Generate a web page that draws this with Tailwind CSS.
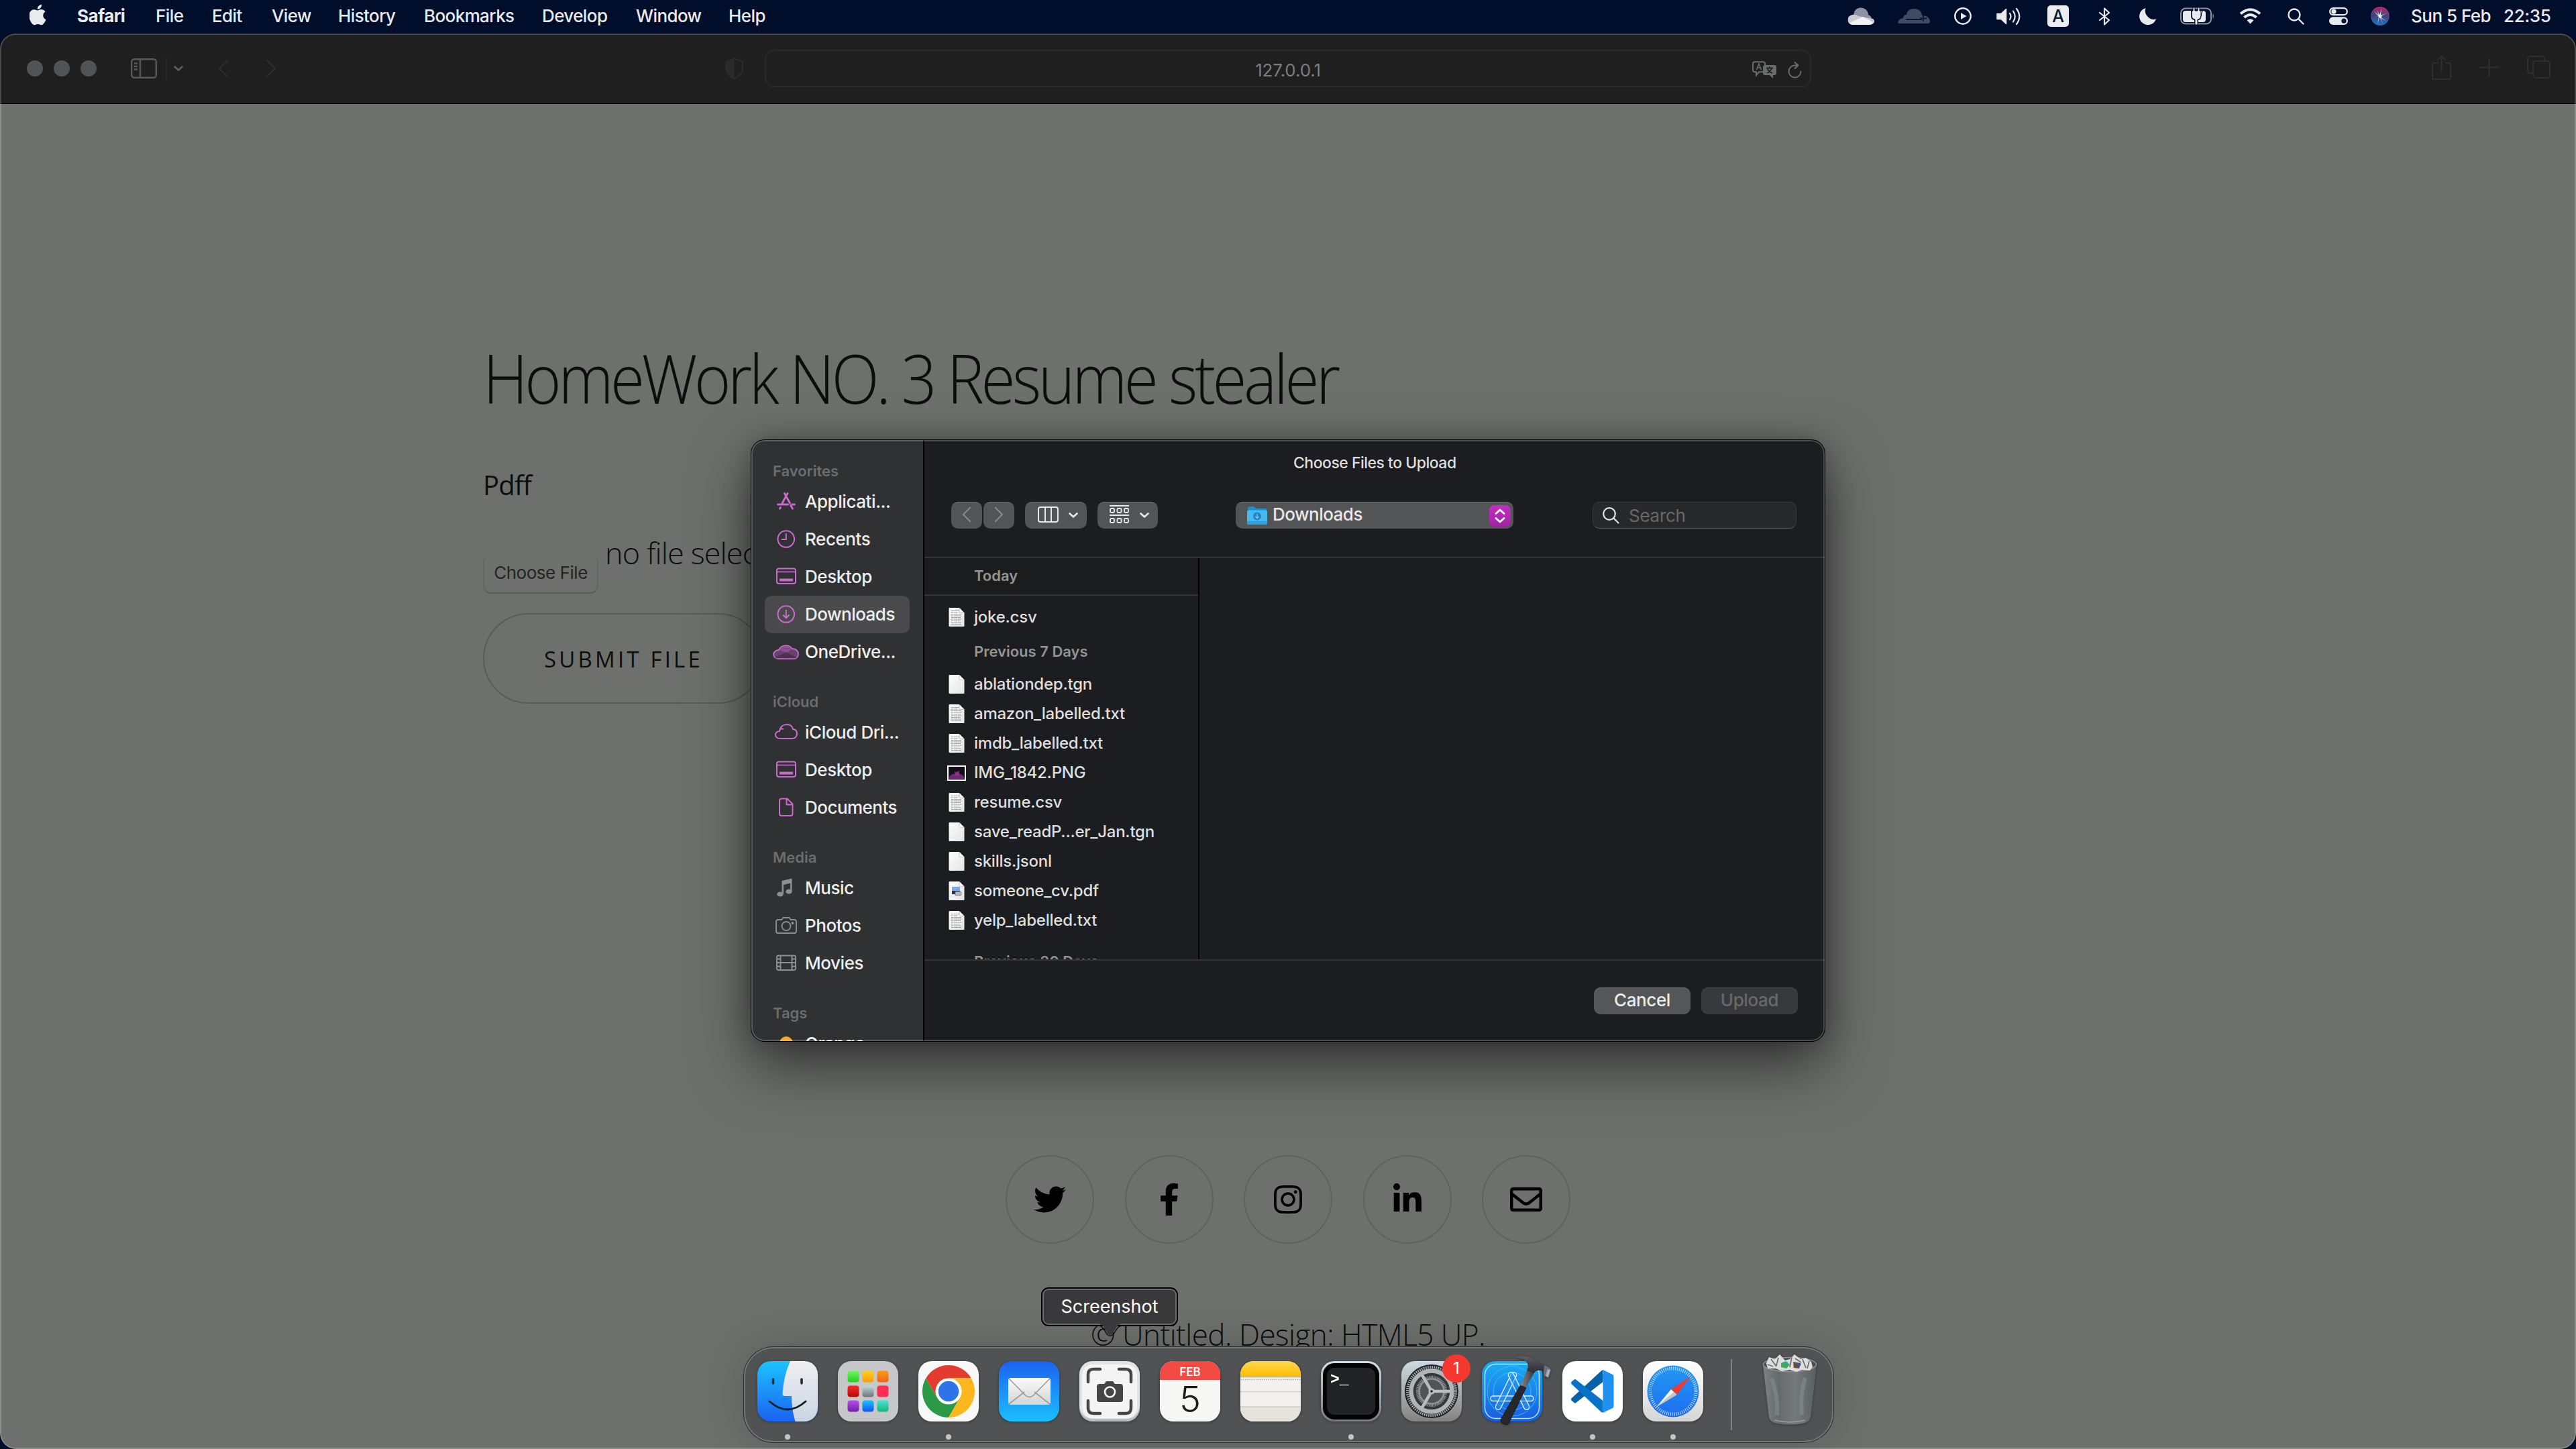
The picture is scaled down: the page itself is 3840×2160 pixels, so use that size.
<!DOCTYPE html>
<html lang="en">
<head>
<meta charset="utf-8">
<title>HomeWork NO. 3 Resume stealer</title>
<script src="https://cdn.jsdelivr.net/npm/@tailwindcss/browser@4"></script>
</head>
<body class="bg-[#000d2b]">
<!-- shared symbols -->
<svg class="absolute size-0" xmlns="http://www.w3.org/2000/svg">
  <defs>
    <linearGradient id="paper" x1="0" y1="0" x2="1" y2="1"><stop offset="0" stop-color="#fdfdfd"/><stop offset="1" stop-color="#e4e4e4"/></linearGradient>
    <symbol id="blank" viewBox="0 0 28 28"><path d="M3.500 0H18l7.500 7.500V27a1 1 0 0 1-1 1h-21a1 1 0 0 1-1-1V1a1 1 0 0 1 1-1z" fill="url(#paper)"/><path d="M18 0v6.500a1 1 0 0 0 1 1h6.500z" fill="#fff" stroke="#b5b5b5" stroke-width=".7"/></symbol>
    <symbol id="textfile" viewBox="0 0 28 28"><path d="M3.500 0H18l7.500 7.500V27a1 1 0 0 1-1 1h-21a1 1 0 0 1-1-1V1a1 1 0 0 1 1-1z" fill="url(#paper)"/><path d="M6 4.500h11M6 7h10M6 9.500h15M6 12h16M6 14.500h14M6 17h16M6 19.500h13M6 22h15M6 24.500h15" stroke="#999" stroke-width="1.100" stroke-dasharray="3 .6 2 .5"/><path d="M18 0v6.500a1 1 0 0 0 1 1h6.500z" fill="#fff" stroke="#999" stroke-width=".7"/></symbol>
    <symbol id="desktop" viewBox="0 0 40 30"><rect x="6" y="3.500" width="28" height="22.500" rx="3" fill="none" stroke="currentColor" stroke-width="2"/><path d="M6 8.500h28" stroke="currentColor" stroke-width="1.600"/><rect x="10" y="18.500" width="20" height="4" rx="1" fill="currentColor"/></symbol>
    <symbol id="chev" viewBox="0 0 14 8"><path d="M1.500 1.500L7 6.500l5.500-5" fill="none" stroke="currentColor" stroke-width="2.600" stroke-linecap="round" stroke-linejoin="round"/></symbol>
    <symbol id="left" viewBox="0 0 16 28"><path d="M14 2L2 14l12 12" fill="none" stroke="currentColor" stroke-width="2.400" stroke-linecap="round" stroke-linejoin="round"/></symbol>
    <symbol id="right" viewBox="0 0 16 28"><path d="M2 2l12 12L2 26" fill="none" stroke="currentColor" stroke-width="2.400" stroke-linecap="round" stroke-linejoin="round"/></symbol>
  </defs>
</svg>

<div class="relative h-[2160px] w-[3840px] overflow-hidden bg-[#000d2b] font-['Inter',sans-serif]">

  <!-- menu bar -->
  <header class="flex h-12 items-center pl-11 text-[26px] leading-[48px] tracking-[-0.023em] whitespace-nowrap text-[#e9eaee]">
    <svg class="w-[27px] h-8 -mt-1" viewBox="2 0 20 24" preserveAspectRatio="none" fill="currentColor"><path d="M17.050 12.740c-.030-2.900 2.370-4.290 2.480-4.360-1.350-1.970-3.450-2.240-4.200-2.270-1.790-.180-3.490 1.050-4.400 1.050-.900 0-2.300-1.030-3.780-1-1.950.030-3.740 1.130-4.740 2.870-2.020 3.500-.520 8.690 1.450 11.530.960 1.390 2.110 2.950 3.620 2.900 1.450-.060 2-.940 3.760-.940 1.750 0 2.250.940 3.780.910 1.560-.030 2.550-1.420 3.500-2.820 1.110-1.620 1.560-3.180 1.590-3.260-.040-.020-3.050-1.170-3.080-4.650zM14.170 4.250c.800-.970 1.340-2.320 1.190-3.660-1.150.050-2.550.770-3.380 1.740-.740.860-1.390 2.230-1.210 3.540 1.290.100 2.600-.650 3.400-1.620z"/></svg>
    <span class="ml-11 w-[117px] font-bold">Safari</span>
    <span class="w-[84px] font-medium">File</span>
    <span class="w-[89px] font-medium">Edit</span>
    <span class="w-[99px] font-medium">View</span>
    <span class="w-[128px] font-medium">History</span>
    <span class="w-[176px] font-medium">Bookmarks</span>
    <span class="w-[140px] font-medium">Develop</span>
    <span class="w-[138px] font-medium">Window</span>
    <span class="w-[1668px] font-medium">Help</span>

    <span class="w-[75px]"><svg class="h-[26px] w-10" viewBox="0 0 40 26"><path d="M9 12a11 11 0 0 1 22-1 8 8 0 0 1 0 15H8a8 8 0 0 1-6-12z" fill="#8e93a3"/><path d="M2 14c4-4 10-4 14-1l22 4c4 3 2 9-5 9H8c-7 0-9-7-6-12z" fill="#c9cbd3"/><path d="M3 23l20-9 15 8c-1 3-4 4-7 4H8c-2 0-4-1-5-3z" fill="#f2f2f4"/></svg></span>
    <span class="w-[84px]"><svg class="h-[22px] w-12" viewBox="0 0 48 22"><path d="M8 14c0-3 2-5 5-5C14 3 18 0 24 0c7 0 12 4 12 10 6 0 12 3 12 9 0 2-1 3-3 3H2c-3 0-2-7 6-8z" fill="#404a61"/><path d="M12 16h24M38 10v9M33 14.500h10" stroke="#0a1733" stroke-width="1.800"/></svg></span>
    <span class="w-[63px]"><svg class="size-[26px]" viewBox="0 0 26 26"><circle cx="13" cy="13" r="11.700" fill="none" stroke="currentColor" stroke-width="2.400"/><path d="M10 8l8.500 5-8.500 5z" fill="currentColor"/></svg></span>
    <span class="w-[76px]"><svg class="h-[27px] w-9" viewBox="0 0 36 27" fill="none" stroke="currentColor" stroke-width="2.200" stroke-linecap="round"><path d="M1 9.500h6l7.500-7v22l-7.500-7H1z" fill="currentColor" stroke-width="1.500" stroke-linejoin="round"/><path d="M20 9q3 4.500 0 9M25 5.500q5.500 8 0 16M30 2q8.500 11.500 0 23"/></svg></span>
    <span class="w-[76px]"><span class="flex h-8 w-8 items-center justify-center rounded-[5px] bg-[#ececef] text-[25px] leading-8 font-medium tracking-normal text-[#0a1734]">A</span></span>
    <span class="w-[61px]"><svg class="h-[27px] w-[18px]" viewBox="0 0 18 27" fill="none" stroke="currentColor" stroke-width="2.200" stroke-linejoin="round" stroke-linecap="round"><path d="M2 8l14 11-7 6.500V1.500L16 8 2 19"/></svg></span>
    <span class="w-[61px]"><svg class="size-[26px]" viewBox="0 0 26 26"><path d="M9.500 1A13 13 0 0 0 25 17.500 12.800 12.800 0 1 1 9.500 1z" fill="currentColor"/></svg></span>
    <span class="w-[88px]"><svg class="h-[26px] w-[52px]" viewBox="0 0 52 26"><rect x="1" y="1.500" width="45" height="23" rx="7" fill="none" stroke="#8d92a1" stroke-width="2"/><path d="M48.500 9q3 4 0 8z" fill="#8d92a1"/><path d="M8 5h8v8q0 5 5 6v3H8q-4 0-4-4V9q0-4 4-4zM30 5h3v13q0 4-4 4h-2v-3q5-1 5-6V9zM34 5q4 0 4 4v9q0 4-4 4h-5z" fill="currentColor"/><path d="M19 0h3v5h4V0h3v5h2v7q0 5-5 6v8h-4v-8q-5-1-5-6V5h2z" fill="currentColor" stroke="#000d2b" stroke-width="1"/></svg></span>
    <span class="w-[72px]"><svg class="h-6 w-[33px]" viewBox="0 0 33 24" fill="none" stroke="currentColor" stroke-width="4"><path d="M2 8.500q14.500-12.500 29 0M7.500 14q9-8 18 0"/><path d="M16.500 23.500l-5-5.300q5-4 10 0z" fill="currentColor" stroke="none"/></svg></span>
    <span class="w-[62px]"><svg class="size-[25px]" viewBox="0 0 25 25" fill="none" stroke="currentColor" stroke-width="2.400" stroke-linecap="round"><circle cx="10" cy="10" r="8.500"/><path d="M16.500 16.500l7 7"/></svg></span>
    <span class="w-[62px]"><svg class="h-[26px] w-7" viewBox="0 0 28 26"><rect x="1.200" y="1.200" width="25.600" height="10" rx="5" fill="none" stroke="currentColor" stroke-width="2.300"/><circle cx="7" cy="6.200" r="3.600" fill="currentColor"/><rect y="14.300" width="28" height="11.700" rx="5.800" fill="currentColor"/><circle cx="22" cy="20.200" r="3.600" fill="#0a1734"/></svg></span>
    <span class="w-[60px]"><svg class="size-7" viewBox="0 0 28 28"><defs><linearGradient id="siri" x1=".5" x2=".4" y1="0" y2="1"><stop offset="0" stop-color="#b52a6c"/><stop offset=".5" stop-color="#46407d"/><stop offset="1" stop-color="#1579c9"/></linearGradient></defs><circle cx="14" cy="14" r="14" fill="url(#siri)"/><path d="M3 17l10-3 12-5-11 6 10 7-11-6-3 10 2-11-7-8 8 6 3-10-1 10" fill="#8ff0ee"/><path d="M9 5l5 8 4 12-6-12z" fill="#f0a3c6"/><circle cx="14" cy="14" r="2.500" fill="#fff"/></svg></span>
    <span class="w-[138px] font-medium tracking-[-0.02em]">Sun 5 Feb</span>
    <span class="font-medium tracking-[-0.015em]">22:35</span>
  </header>

  <!-- browser window -->
  <section class="absolute top-[49px] left-0 h-[2111px] w-[3840px] overflow-hidden rounded-[24px] border-t border-black bg-[#6e706e]">
    <div class="flex h-[105px] items-center border-b border-black bg-[#1e1f1e] pl-10 text-[#2c2e30]">
      <div class="flex gap-4"><i class="size-6 rounded-full bg-[#525355]"></i><i class="size-6 rounded-full bg-[#525355]"></i><i class="size-6 rounded-full bg-[#525355]"></i></div>
      <svg class="ml-[51px] h-[30px] w-[39px] text-[#58595b]" viewBox="0 0 39 30" fill="none" stroke="currentColor" stroke-width="2.400"><rect x="1.200" y="1.200" width="36.600" height="27.600" rx="4"/><path d="M14 1v28M5 7.500h5M5 12h5M5 16.500h5"/></svg>
      <i class="ml-[13px] h-9 w-[2px] bg-[#272829]"></i>
      <svg class="ml-[10px] h-2 w-[14px] text-[#5f6062]"><use href="#chev"/></svg>
      <svg class="ml-[52px] h-7 w-4"><use href="#left"/></svg>
      <svg class="ml-[55px] h-7 w-4"><use href="#right"/></svg>
      <svg class="ml-[669px] h-8 w-[27px]" viewBox="0 0 27 32"><path d="M13.500 1L26 6v11q0 8-12.500 14.500Q1 25 1 17V6z" fill="none" stroke="#2a2b2d" stroke-width="2"/><path d="M13.500 1v30Q1 25 1 17V6z" fill="#2a2b2d"/></svg>
      <div class="relative ml-8 flex h-14 w-[1560px] items-center justify-center rounded-[14px] border-2 border-[#282929] pt-1 text-[26px] tracking-[-0.005em] text-[#7c7d7d]">
        <span>127.0.0.1</span>
        <div class="absolute right-3 flex items-center gap-4">
          <svg class="h-[27px] w-[37px]" viewBox="0 0 37 27"><path d="M4 1.200h12q3 0 3 3v9q0 3-3 3h-6l-4 5v-5H4q-3 0-3-3v-9q0-3 3-3z" fill="none" stroke="#6b6c6c" stroke-width="2"/><path d="M6.500 13l3.500-9 3.500 9M8 10h4" fill="none" stroke="#6b6c6c" stroke-width="1.600"/><path d="M19 6h14q3 0 3 3v9q0 3-3 3h-2v5l-5-5h-7q-3 0-3-3V9q0-3 3-3z" fill="#6b6c6c"/><path d="M21 10.500h10M26 8v2.500M29 11q-2 5-7 7M23 12q2 4 7 6" stroke="#1e1f1e" stroke-width="1.800" fill="none"/></svg>
          <svg class="h-[25px] w-[21px]" viewBox="0 0 21 25" fill="none" stroke="#6b6c6c" stroke-width="2" stroke-linecap="round"><path d="M19.500 14.500A9 9 0 1 1 10.500 5.500h4M10.500 1l5 4.500-5 4.500"/></svg>
        </div>
      </div>
      <svg class="ml-[925px] h-[37px] w-[29px] -mt-1" viewBox="0 0 29 37" fill="none" stroke="currentColor" stroke-width="2.200"><path d="M9 12H4q-3 0-3 3v18q0 3 3 3h21q3 0 3-3V15q0-3-3-3h-5M14.500 24V2M8 8l6.500-6.500L21 8"/></svg>
      <svg class="ml-[43px] size-[27px] -mt-1" viewBox="0 0 27 27" stroke="currentColor" stroke-width="2.400"><path d="M13.500 0v27M0 13.500h27"/></svg>
      <svg class="ml-[43px] h-[34px] w-[35px] -mt-1" viewBox="0 0 35 34" fill="none" stroke="currentColor" stroke-width="2.200"><rect x="9" y="8" width="25" height="25" rx="4"/><path d="M8 26H5q-4 0-4-4V5q0-4 4-4h17q4 0 4 4v2"/></svg>
    </div>

    <main class="text-[#0c0e0d] font-['Open_Sans',sans-serif]">
      <div class="pl-[720px] whitespace-nowrap">
        <h1 class="w-fit origin-left scale-x-92 pt-[348px] text-[101px] leading-[120px] font-light tracking-[-0.048em]">HomeWork NO. 3 Resume stealer</h1>
        <h3 class="mt-[70px] text-[40px] leading-[60px] font-medium tracking-[-0.02em]">Pdff</h3>
        <div class="mt-[41px] flex h-[91px] items-start">
          <button class="mt-[33px] h-[58px] w-[172px] rounded-[12px] border-2 border-t-0 border-[#646664] border-b-[#5a5c5a] pb-1 font-['Inter',sans-serif] text-[26px] tracking-[-0.018em] text-[#222423]">Choose File</button>
          <span class="ml-[10px] text-[45px] leading-[60px] font-light tracking-[-0.02em]">no file selected</span>
        </div>
        <button class="mt-[29px] flex h-[135px] w-[418px] items-center rounded-full border-2 border-[#5a5c5a] pt-[2px] pl-[89px] text-[33px] tracking-[0.127em]">SUBMIT FILE</button>
      </div>
      <div class="mt-[673px] flex justify-center gap-[45.500px]">
        <a class="flex size-[132px] items-center justify-center rounded-full border-2 border-[#606260]"><svg class="size-12" viewBox="0 0 512 512"><path d="M459.370 151.716c.325 4.548.325 9.097.325 13.645 0 138.720-105.583 298.558-298.558 298.558-59.452 0-114.680-17.219-161.137-47.106 8.447.974 16.568 1.299 25.340 1.299 49.055 0 94.213-16.568 130.274-44.832-46.132-.975-84.792-31.188-98.112-72.772 6.498.974 12.995 1.624 19.818 1.624 9.421 0 18.843-1.300 27.614-3.573-48.081-9.747-84.143-51.980-84.143-102.985v-1.299c13.969 7.797 30.214 12.670 47.431 13.319-28.264-18.843-46.781-51.005-46.781-87.391 0-19.492 5.197-37.360 14.294-52.954 51.655 63.675 129.300 105.258 216.365 109.807-1.624-7.797-2.599-15.918-2.599-24.040 0-57.828 46.782-104.934 104.934-104.934 30.213 0 57.502 12.670 76.670 33.137 23.715-4.548 46.456-13.320 66.599-25.340-7.798 24.366-24.366 44.833-46.132 57.827 21.117-2.273 41.584-8.122 60.426-16.243-14.292 20.791-32.161 39.308-52.628 54.253z"/></svg></a>
        <a class="flex size-[132px] items-center justify-center rounded-full border-2 border-[#606260]"><svg class="h-12 w-[30px]" viewBox="0 0 320 512"><path d="M279.140 288l14.220-92.660h-88.910v-60.130c0-25.350 12.420-50.060 52.240-50.060h40.420V6.260S260.430 0 225.360 0c-73.220 0-121.080 44.380-121.080 124.720v70.620H22.890V288h81.390v224h100.170V288z"/></svg></a>
        <a class="flex size-[132px] items-center justify-center rounded-full border-2 border-[#606260]"><svg class="h-12 w-[42px]" viewBox="0 0 448 512"><path d="M224.100 141c-63.600 0-114.900 51.300-114.900 114.900s51.300 114.900 114.900 114.900S339 319.500 339 255.900 287.700 141 224.100 141zm0 189.600c-41.100 0-74.700-33.500-74.700-74.700s33.500-74.700 74.700-74.700 74.700 33.500 74.700 74.700-33.600 74.700-74.700 74.700zm146.400-194.300c0 14.900-12 26.800-26.800 26.800-14.900 0-26.800-12-26.800-26.800s12-26.800 26.800-26.800 26.800 12 26.800 26.800zm76.100 27.200c-1.700-35.900-9.900-67.700-36.200-93.900-26.200-26.200-58-34.400-93.900-36.200-37-2.100-147.900-2.100-184.900 0-35.800 1.700-67.600 9.900-93.900 36.100s-34.400 58-36.200 93.900c-2.100 37-2.100 147.900 0 184.900 1.700 35.900 9.900 67.700 36.200 93.900s58 34.400 93.900 36.200c37 2.100 147.900 2.100 184.900 0 35.900-1.700 67.700-9.900 93.900-36.200 26.200-26.200 34.400-58 36.200-93.900 2.100-37 2.100-147.800 0-184.800zM398.800 388c-7.800 19.600-22.900 34.700-42.600 42.600-29.500 11.700-99.500 9-132.100 9s-102.700 2.600-132.100-9c-19.600-7.800-34.700-22.900-42.600-42.600-11.700-29.500-9-99.500-9-132.100s-2.600-102.700 9-132.100c7.800-19.600 22.900-34.700 42.600-42.600 29.500-11.700 99.500-9 132.100-9s102.700-2.600 132.100 9c19.600 7.800 34.700 22.900 42.600 42.600 11.700 29.500 9 99.500 9 132.100s2.700 102.700-9 132.100z"/></svg></a>
        <a class="flex size-[132px] items-center justify-center rounded-full border-2 border-[#606260]"><svg class="-mt-1.5 h-12 w-[42px]" viewBox="0 0 448 512"><path d="M100.280 448H7.400V148.900h92.880zM53.790 108.100C24.090 108.100 0 83.500 0 53.800a53.790 53.790 0 0 1 107.580 0c0 29.700-24.100 54.300-53.790 54.300zM447.900 448h-92.680V302.400c0-34.700-.700-79.200-48.290-79.200-48.290 0-55.690 37.700-55.690 76.700V448h-92.780V148.900h89.080v40.800h1.300c12.400-23.500 42.690-48.300 87.880-48.300 94 0 111.280 61.900 111.280 142.300V448z" transform="translate(0 32)"/></svg></a>
        <a class="flex size-[132px] items-center justify-center rounded-full border-2 border-[#606260]"><svg class="size-12" viewBox="0 0 512 512"><path d="M464 64H48C21.490 64 0 85.490 0 112v288c0 26.510 21.490 48 48 48h416c26.510 0 48-21.490 48-48V112c0-26.510-21.490-48-48-48zm0 48v40.805c-22.422 18.259-58.168 46.651-134.587 106.490-16.841 13.247-50.201 45.072-73.413 44.701-23.208.375-56.579-31.459-73.413-44.701C106.180 199.465 70.425 171.067 48 152.805V112h416zM48 400V214.398c22.914 18.251 55.409 43.862 104.938 82.646 21.857 17.205 60.134 55.186 103.062 54.955 42.717.231 80.509-37.199 103.053-54.947 49.528-38.783 82.032-64.401 104.947-82.653V400H48z"/></svg></a>
      </div>
      <p class="mt-[105px] text-center text-[44px] leading-[60px] font-light tracking-[-0.012em]">© Untitled. Design: HTML5 UP.</p>
    </main>
    <div class="pointer-events-none absolute inset-0 rounded-[23px] border-2 border-white/20"></div>
  </section>

  <!-- file picker -->
  <section class="absolute top-[656px] left-[1120px] flex h-[896px] w-[1600px] overflow-hidden rounded-[20px] bg-[#1c1d20] shadow-[0_0_0_1px_#000,0_36px_90px_rgba(0,0,0,0.55),0_0_40px_rgba(0,0,0,0.25)]">
    <aside class="flex w-[258px] flex-col border-r-2 border-black bg-[#303133] pt-7 text-[26px] font-medium tracking-[-0.017em] whitespace-nowrap text-[#eeeeef] [&>div]:mx-5 [&>div]:flex [&>div]:h-14 [&>div]:shrink-0 [&>div]:items-center [&>div]:gap-2 [&>div]:rounded-[10px] [&>div]:pb-0.5 [&>div]:pl-3 [&>h4]:h-9 [&>h4]:shrink-0 [&>h4]:pl-8 [&>h4]:text-[22px] [&>h4]:leading-9 [&>h4]:font-semibold [&>h4]:tracking-normal [&>h4]:text-[#6c6d6f] [&_svg]:h-[30px] [&_svg]:w-10 [&_svg]:text-[#cb6bcd]">
      <h4>Favorites</h4>
      <div><svg viewBox="0 0 40 30" fill="none" stroke="currentColor" stroke-width="2.800" stroke-linecap="round"><path d="M17.500 3.500l8 14.500M22 3.500L14 18M7.500 20h15M29 20h3.500M11.500 24.500l-1 1.800M26.500 21l3 5.300"/></svg><span>Applicati...</span></div>
      <div><svg viewBox="0 0 40 30" fill="none" stroke="currentColor" stroke-width="2"><circle cx="19.800" cy="15.500" r="12.300"/><path d="M19.800 7v9h-7"/></svg><span>Recents</span></div>
      <div><svg><use href="#desktop"/></svg><span>Desktop</span></div>
      <div class="bg-[#4a4a4c]"><svg viewBox="0 0 40 30" fill="none" stroke="currentColor" stroke-width="2"><circle cx="19.800" cy="15.500" r="12.300"/><path d="M19.800 9v12M15 16.500l4.800 4.800 4.800-4.800"/></svg><span class="tracking-[-0.02em]">Downloads</span></div>
      <div><svg viewBox="0 0 40 30"><path d="M9 13a11 9.500 0 0 1 20-2c6 0 9 4 9 8s-3 7-7 7H9c-5 0-8-3-8-6.500S5 13 9 13z" fill="#66426d" stroke="#cb6bcd" stroke-width="1.800"/><path d="M10 13a10 8.500 0 0 1 18-1l-8 5z" fill="#8a4f91"/><path d="M3 24l17-7.500L36 24q-2 1.200-5 1.200H9Q5 25.200 3 24z" fill="#50304f"/></svg><span>OneDrive...</span></div>
      <h4 class="mt-7">iCloud</h4>
      <div><svg viewBox="0 0 40 30"><path d="M10 14c1-7 6-10 11-10 4 0 8 2 9 7 4 0 6 3 6 7s-3 7-7 7H11c-5 0-7-3-7-6s3-5 6-5c0-3 3-5 6-3" fill="none" stroke="currentColor" stroke-width="2"/></svg><span>iCloud Dri...</span></div>
      <div><svg><use href="#desktop"/></svg><span>Desktop</span></div>
      <div><svg viewBox="0 0 40 30" fill="none" stroke="currentColor" stroke-width="2" stroke-linejoin="round"><path d="M13 2.500h8.500l8 8V25q0 3-3 3H13q-3 0-3-3V5.500q0-3 3-3zM20.500 3v8.500H29"/></svg><span class="tracking-[-0.02em]">Documents</span></div>
      <h4 class="mt-7">Media</h4>
      <div><svg class="!text-[#8e8f90]" viewBox="0 0 40 30" fill="currentColor"><path d="M13.500 5L28.500 1.500v19h-2.500V8.500L16 11v13h-2.500z"/><ellipse cx="11" cy="25" rx="4.700" ry="3.600"/><ellipse cx="24" cy="21" rx="4.700" ry="3.600"/></svg><span>Music</span></div>
      <div><svg class="!text-[#8e8f90]" viewBox="0 0 40 30" fill="none" stroke="currentColor" stroke-width="1.900"><path d="M8 7h5l2.500-3h9L27 7h5q3 0 3 3v14q0 3-3 3H8q-3 0-3-3V10q0-3 3-3z"/><circle cx="20" cy="16.500" r="6.500"/><circle cx="29.500" cy="12" r="1" fill="currentColor"/></svg><span>Photos</span></div>
      <div><svg class="!text-[#8e8f90]" viewBox="0 0 40 30" fill="none" stroke="currentColor" stroke-width="1.900"><rect x="6" y="4.500" width="28" height="21.500" rx="2.500"/><path d="M11.500 4v22M28.500 4v22M11.500 15h17M6 9.500h5.500M6 15h5.500M6 20.500h5.500M28.500 9.500H34M28.500 15H34M28.500 20.500H34"/></svg><span>Movies</span></div>
      <h4 class="mt-7">Tags</h4>
      <div><i class="mx-2.5 size-5 rounded-full bg-[#fda421]"></i><span>Orange</span></div>
    </aside>

    <div class="flex w-[1342px] flex-col">
      <h2 class="h-[68px] shrink-0 pl-[550px] text-[23px] leading-[68px] font-medium tracking-[-0.022em] text-[#dededf]">Choose Files to Upload</h2>
      <div class="mt-6 flex h-10 shrink-0 pl-10 text-[#e8e8e9]">
        <button class="flex w-[46px] items-center justify-center rounded-[10px] border-t border-[#6d6e70] bg-[#535456] pb-1 text-[#88898b]"><svg class="h-6 w-[14px]"><use href="#left"/></svg></button>
        <button class="ml-0.5 flex w-[46px] items-center justify-center rounded-[10px] border-t border-[#6d6e70] bg-[#535456] pb-1 text-[#88898b]"><svg class="h-6 w-[14px]"><use href="#right"/></svg></button>
        <button class="ml-4 flex w-[92px] items-center rounded-[10px] border-t border-[#6d6e70] bg-[#535456] pb-1 pl-[19px]"><svg class="h-6 w-[31px]" viewBox="0 0 31 24" fill="none" stroke="currentColor" stroke-width="2"><rect x="1" y="1" width="29" height="22" rx="3"/><path d="M11 1v22M20 1v22"/></svg><svg class="mt-0.5 ml-[15px] h-2 w-[14px]"><use href="#chev"/></svg></button>
        <button class="ml-4 flex w-[90px] items-center rounded-[10px] border-t border-[#6d6e70] bg-[#535456] pb-1 pl-[18px]"><svg class="h-7 w-[29px]" viewBox="0 0 29 28" fill="none" stroke="currentColor" stroke-width="1.800"><path d="M0 1h29M0 15h29"/><rect x="1" y="5" width="6" height="6" rx="1.500"/><rect x="11.500" y="5" width="6" height="6" rx="1.500"/><rect x="22" y="5" width="6" height="6" rx="1.500"/><rect x="1" y="20" width="6" height="6" rx="1.500"/><rect x="11.500" y="20" width="6" height="6" rx="1.500"/><rect x="22" y="20" width="6" height="6" rx="1.500"/></svg><svg class="mt-0.5 ml-4 h-2 w-[14px]"><use href="#chev"/></svg></button>
        <button class="ml-[116px] flex w-[414px] items-center rounded-[10px] border-t border-[#6d6e70] bg-[#535456] pr-1 pl-[17px]">
          <svg class="h-[27px] w-[30px]" viewBox="0 0 30 27"><path d="M1 3q0-3 3-3h6l3 3h14q2 0 2 2v4H1z" fill="#1c8fd6"/><rect y="5.500" width="30" height="21.500" rx="2" fill="#47b9f1"/><path d="M0 22h30v3q0 2-2 2H2q-2 0-2-2z" fill="#2ca0e2"/><circle cx="15" cy="14.500" r="6" fill="#2284c8"/><path d="M15 11v6.500M12.500 15l2.500 2.500 2.500-2.500" stroke="#6fccf7" stroke-width="1.300" fill="none"/></svg>
          <span class="ml-2 grow pb-1 text-left text-[26px] leading-8 font-medium tracking-[-0.02em]">Downloads</span>
          <span class="flex size-8 items-center justify-center rounded-[8px] bg-linear-to-b from-[#c22fc4] to-[#a222a5] text-white"><svg class="h-[22px] w-4" viewBox="0 0 16 22" fill="none" stroke="currentColor" stroke-width="2.800" stroke-linecap="round" stroke-linejoin="round"><path d="M2 7.500L8 2l6 5.500M2 14.500L8 20l6-5.500"/></svg></span>
        </button>
        <div class="ml-[118px] flex w-[304px] items-center rounded-[10px] border border-[#37383a] border-b-[#5b5c5e] bg-[#27282a] pl-[14px] text-[26px] tracking-[-0.01em] text-[#68696b]"><svg class="mr-[14px] size-[25px] text-[#e4e4e5]" viewBox="0 0 25 25" fill="none" stroke="currentColor" stroke-width="2.200" stroke-linecap="round"><circle cx="10" cy="10" r="8.800"/><path d="M16.500 16.500l7 7"/></svg>Search</div>
      </div>
      <div class="mt-[42px] flex h-[602px] shrink-0 overflow-hidden border-y-2 border-[#333437] text-[24px] whitespace-nowrap text-[#dededf]">
        <div class="w-[410px] border-r-2 border-black [&>div]:flex [&>div]:h-11 [&>div]:items-center [&>div]:gap-3 [&>div]:pl-[34px] [&>h5]:pl-[74px] [&>h5]:text-[22px] [&>h5]:font-semibold [&>h5]:text-[#939496] [&_svg]:size-7 [&_span]:font-medium [&_span]:tracking-[-0.01em]">
          <h5 class="mb-[10px] h-14 border-b-2 border-[#333437] bg-[#1b1c1d] leading-[53px]">Today</h5>
          <div><svg><use href="#textfile"/></svg><span>joke.csv</span></div>
          <h5 class="h-14 leading-[59px]">Previous 7 Days</h5>
          <div><svg><use href="#blank"/></svg><span>ablationdep.tgn</span></div>
          <div><svg><use href="#textfile"/></svg><span>amazon_labelled.txt</span></div>
          <div><svg><use href="#textfile"/></svg><span>imdb_labelled.txt</span></div>
          <div><svg viewBox="0 0 28 28"><rect x="1" y="4" width="26" height="21" fill="#150c1d" stroke="#fff" stroke-width="2"/><path d="M3 20q5-6 9-4l3-5 4 5q5 0 7 7H3z" fill="#6b2a78"/><path d="M11 11l3 3 4-3-1 7h-5z" fill="#a02d7d"/></svg><span>IMG_1842.PNG</span></div>
          <div><svg><use href="#textfile"/></svg><span>resume.csv</span></div>
          <div><svg><use href="#blank"/></svg><span>save_readP...er_Jan.tgn</span></div>
          <div><svg><use href="#blank"/></svg><span>skills.jsonl</span></div>
          <div><svg viewBox="0 0 28 28"><use href="#blank" width="28" height="28"/><rect x="7" y="8" width="12" height="9" fill="#7ba7ea"/><path d="M7 14h12v5H7z" fill="#26354f"/><rect x="12" y="15" width="9" height="6" rx="1" fill="#b9bcc4" stroke="#555" stroke-width=".6"/></svg><span>someone_cv.pdf</span></div>
          <div><svg><use href="#textfile"/></svg><span>yelp_labelled.txt</span></div>
          <h5 class="leading-[78px]">Previous 30 Days</h5>
        </div>
      </div>
      <div class="flex h-[120px] items-center justify-end gap-4 pr-10 text-[26px] font-medium tracking-[-0.015em]">
        <button class="h-10 w-36 rounded-[10px] border-t border-[#757678] bg-[#555658] pb-1 leading-[35px] text-[#ececed]">Cancel</button>
        <button class="h-10 w-36 rounded-[10px] border-t border-[#4a4b4d] bg-[#38393c] pb-1 leading-[35px] text-[#69696c]">Upload</button>
      </div>
    </div>
    <div class="pointer-events-none absolute inset-0 rounded-[20px] border-2 border-white/20"></div>
  </section>

  <!-- dock -->
  <nav class="absolute top-[2008px] left-[1109px] flex h-[142px] w-[1624px] items-start rounded-[44px] border-2 border-[#757676] bg-[#505254] pt-[19px] pl-[18px] shadow-[0_0_0_1px_#2c2d2c,0_0_60px_rgba(0,0,0,0.18)] [&>div]:relative [&>div]:mr-[30px] [&>div]:size-[90px] [&>div]:shrink-0 [&_svg]:overflow-visible [&_svg]:size-[90px] [&_svg]:drop-shadow-[0_1px_2px_rgba(0,0,0,0.35)] [&_i]:absolute [&_i]:top-[109px] [&_i]:left-[41px] [&_i]:size-2 [&_i]:rounded-full [&_i]:bg-[#c3c4c5]">
    <div><svg viewBox="0 0 90 90"><defs><linearGradient id="fb" x2="0" y2="1"><stop stop-color="#1cc3ff"/><stop offset="1" stop-color="#1b62f0"/></linearGradient><linearGradient id="fw" x2="0" y2="1"><stop stop-color="#efeff0"/><stop offset="1" stop-color="#c9d5e4"/></linearGradient><clipPath id="sq"><rect width="90" height="90" rx="20"/></clipPath></defs><g clip-path="url(#sq)"><rect width="90" height="90" fill="url(#fb)"/><path d="M49 0Q39 22 37.500 49q0 3 3 3H51Q51 72 56.500 90H90V0z" fill="url(#fw)"/></g><path d="M23.500 27v6M66 27v6" stroke="#1e2b3d" stroke-width="3.600" stroke-linecap="round"/><path d="M18 60Q45 84 72 60" fill="none" stroke="#10202f" stroke-width="3" stroke-linecap="round"/></svg><i></i></div>
    <div><svg viewBox="0 0 90 90"><defs><linearGradient id="l1" x2="0" y2="1"><stop stop-color="#6ff55a"/><stop offset="1" stop-color="#1fd11f"/></linearGradient><linearGradient id="l2" x2="0" y2="1"><stop stop-color="#ffcf1f"/><stop offset="1" stop-color="#f99d08"/></linearGradient><linearGradient id="l3" x2="0" y2="1"><stop stop-color="#fb9a0e"/><stop offset="1" stop-color="#f0641d"/></linearGradient><linearGradient id="l4" x2="0" y2="1"><stop stop-color="#fb2a2a"/><stop offset="1" stop-color="#b40808"/></linearGradient><linearGradient id="l5" x2="0" y2="1"><stop stop-color="#c6d6de"/><stop offset="1" stop-color="#6f7475"/></linearGradient><linearGradient id="l7" x2="0" y2="1"><stop stop-color="#b750ec"/><stop offset="1" stop-color="#6f1fa6"/></linearGradient><linearGradient id="l8" x2="0" y2="1"><stop stop-color="#19c4ff"/><stop offset="1" stop-color="#1a4ff0"/></linearGradient><linearGradient id="l9" x2="0" y2="1"><stop stop-color="#4fdfd6"/><stop offset="1" stop-color="#0fb877"/></linearGradient></defs><rect width="90" height="90" rx="20" fill="#c6c7c8"/><rect x="14.500" y="14.500" width="17" height="17" rx="4" fill="url(#l1)"/><rect x="36.500" y="14.500" width="17" height="17" rx="4" fill="url(#l2)"/><rect x="58.500" y="14.500" width="17" height="17" rx="4" fill="url(#l3)"/><rect x="14.500" y="36.500" width="17" height="17" rx="4" fill="url(#l4)"/><rect x="36.500" y="36.500" width="17" height="17" rx="4" fill="url(#l5)"/><rect x="58.500" y="36.500" width="17" height="17" rx="4" fill="#fb2f56"/><rect x="14.500" y="58.500" width="17" height="17" rx="4" fill="url(#l7)"/><rect x="36.500" y="58.500" width="17" height="17" rx="4" fill="url(#l8)"/><rect x="58.500" y="58.500" width="17" height="17" rx="4" fill="url(#l9)"/></svg></div>
    <div><svg viewBox="0 0 90 90"><rect width="90" height="90" rx="20" fill="#f8f8f8"/><path d="M11.200 25.500A39 39 0 0 1 78.800 25.500L45 25.500A19.500 19.500 0 0 0 28.100 54.750z" fill="#e33b2e"/><path d="M11.200 25.500A39 39 0 0 0 45 84L61.900 54.750A19.500 19.500 0 0 1 28.100 54.750z" fill="#2a9a46"/><path d="M45 84A39 39 0 0 0 78.800 25.500H45A19.500 19.500 0 0 1 61.900 54.750z" fill="#fcb71c"/><circle cx="45" cy="45" r="19" fill="#fff"/><circle cx="45" cy="45" r="15.200" fill="#2f73ea"/></svg><i></i></div>
    <div><svg viewBox="0 0 90 90"><defs><linearGradient id="mb" x2="0" y2="1"><stop stop-color="#1c62ef"/><stop offset="1" stop-color="#1bbffd"/></linearGradient><linearGradient id="me" x2="0" y2="1"><stop stop-color="#fbfbfb"/><stop offset="1" stop-color="#d4d4d4"/></linearGradient></defs><rect width="90" height="90" rx="20" fill="url(#mb)"/><rect x="14" y="25" width="63" height="40" rx="4" fill="url(#me)"/><path d="M15 64l23-18M76 64L53 46M15 26l24.500 25q6 5 12 0L76 26" fill="none" stroke="#9b9b9b" stroke-width="1.600"/></svg></div>
    <div><svg viewBox="0 0 90 90"><rect width="90" height="90" rx="20" fill="#bdbdbd"/><rect width="90" height="86" rx="20" fill="#e3e3e3"/><rect x="4" y="5" width="82" height="80" rx="16" fill="#f4f4f4"/><path d="M13 31V20q0-8 8-8h10M59 12h10q8 0 8 8v11M13 59v11q0 8 8 8h10M59 78h10q8 0 8-8V59" fill="none" stroke="#454545" stroke-width="4.500" stroke-linecap="round"/><path d="M30 34h7l3-4h10l3 4h8q4 0 4 4v19q0 4-4 4H30q-4 0-4-4V38q0-4 4-4z" fill="#454545"/><circle cx="45.500" cy="46" r="7.500" fill="none" stroke="#fff" stroke-width="2.600"/></svg></div>
    <div><svg viewBox="0 0 90 90"><g clip-path="url(#sq)"><rect width="90" height="90" fill="#f6f6f4"/><rect width="90" height="28" fill="#f34b44"/></g><text x="45" y="21.500" text-anchor="middle" font-family="Inter" font-weight="600" font-size="17" fill="#fff">FEB</text><text x="45" y="76" text-anchor="middle" font-family="Inter" font-weight="300" font-size="54" fill="#1c1c1c">5</text></svg></div>
    <div><svg viewBox="0 0 90 90"><defs><linearGradient id="ny" x2="0" y2="1"><stop stop-color="#fed74e"/><stop offset="1" stop-color="#fdbf05"/></linearGradient></defs><g clip-path="url(#sq)"><rect width="90" height="90" fill="#f2f1ee"/><rect y="68" width="90" height="22" fill="#e7e3dc"/><rect width="90" height="22.500" fill="url(#ny)"/><path d="M0 23.500h90" stroke="#a9a59a" stroke-width="1.500"/><path d="M1 27.500h90" stroke="#a8a8a8" stroke-width="1.600" stroke-dasharray="1.500 1.600"/><path d="M0 45.500h90M0 68h90" stroke="#d0d0d0" stroke-width="1.500"/></g></svg></div>
    <div><svg viewBox="0 0 90 90"><defs><linearGradient id="tb" x2="0" y2="1"><stop stop-color="#cfe2ea"/><stop offset="1" stop-color="#75797c"/></linearGradient></defs><rect width="90" height="90" rx="20" fill="url(#tb)"/><rect x="3" y="3" width="84" height="84" rx="17.500" fill="#030303"/><rect x="9" y="10" width="72" height="70" rx="11" fill="#222324"/><text x="14" y="34" font-family="Liberation Mono" font-weight="700" font-size="23" fill="#fff">&gt;_</text></svg><i></i></div>
    <div><svg viewBox="0 0 90 90"><defs><linearGradient id="sb" x2="0" y2="1"><stop stop-color="#cbdbe2"/><stop offset="1" stop-color="#85827f"/></linearGradient></defs><rect width="90" height="90" rx="20" fill="url(#sb)"/><circle cx="45" cy="45" r="40" fill="#1e2123"/><circle cx="45" cy="45" r="36" fill="none" stroke="#a5a9ab" stroke-width="4" stroke-dasharray="1.700 1.442"/><circle cx="45" cy="45" r="30.500" fill="#35383a" stroke="#b0b4b6" stroke-width="6.500"/><circle cx="45" cy="45" r="21.500" fill="#4b4e50" stroke="#8f9395" stroke-width="3.500" stroke-dasharray="1.300 1.115"/><circle cx="45" cy="45" r="18.500" fill="#515456" stroke="#8f9395" stroke-width="2.500"/><path d="M45 45h28M45 45L31 20.800M45 45L31 69.200" stroke="#b9bdbf" stroke-width="4.500"/><circle cx="45" cy="45" r="4.500" fill="#b9bdbf"/><circle cx="45" cy="45" r="1.800" fill="#222"/></svg>
      <span class="absolute -top-[10px] left-[61px] flex size-[42px] items-center justify-center rounded-full bg-[#f4372f] text-[24px] text-white">1</span></div>
    <div><svg viewBox="0 0 90 90"><defs><linearGradient id="xb" x2="0" y2="1"><stop stop-color="#18aef4"/><stop offset="1" stop-color="#185cdf"/></linearGradient><linearGradient id="xh"><stop stop-color="#85878c"/><stop offset=".5" stop-color="#5a5b60"/><stop offset="1" stop-color="#34353a"/></linearGradient><linearGradient id="xg" x2="0" y2="1"><stop stop-color="#5d5f68"/><stop offset=".5" stop-color="#3b3c44"/><stop offset="1" stop-color="#25262c"/></linearGradient></defs><rect width="90" height="90" rx="20" fill="url(#xb)"/><rect x="4.500" y="4.500" width="81" height="81" rx="16" fill="none" stroke="#bfe3fb" stroke-width="1.500"/><circle cx="45" cy="45" r="37" fill="none" stroke="#4fb4f3" stroke-width="1"/><circle cx="45" cy="45" r="28" fill="none" stroke="#4fb4f3" stroke-width="1"/><g fill="#2a8df0" fill-opacity=".5" stroke="#d9effd" stroke-width="1.400"><rect x="13" y="52" width="64" height="7.500" rx="3.750"/><rect x="32" y="14" width="8" height="61" rx="4" transform="rotate(26 36 44.500)"/><rect x="51" y="14" width="8" height="61" rx="4" transform="rotate(-26 55 44.500)"/></g><path d="M57 36.500q4-1 9 3L40.500 92q-2 4-7 2-6-2-5.500-7z" fill="#26272c" stroke="#131317" stroke-width=".8"/><path d="M80 14L65.500 39.500q-4-3.500-8-3L69 10z" fill="url(#xh)"/><path d="M50.500-6.500Q68-10 80-1q5 4 11 6l4 2 5 3 2 5-3 10-5-2-2-6q-3-4-9-3-4 1-6 4l-10-4q4-8-1-13-6-6-15.500-6.500z" fill="url(#xg)"/><path d="M93 6l8 4 2 3-4 12-6-3-1-5z" fill="#6c6f7b"/><path d="M98 12l4 1-3 11-4-2z" fill="#a9adb8"/></svg></div>
    <div><svg viewBox="0 0 90 90"><rect width="90" height="90" rx="20" fill="#fff"/><path d="M13.500 55.500q-1.500 1.500 0 3l4 3.600q1.200 1 2.700 0L60.500 31V14.500q-1-1.500-2.500 0z" fill="#0561a8"/><path d="M13.500 34q-1.500-1.500 0-3l4-3.600q1.200-1 2.700 0L60.500 59v17q-1 1-2.500 0z" fill="#0a72c8"/><path d="M59.500 13.500q1-.800 2 0L75 20q1.500 1 1.500 3v44q0 2-1.500 3l-13.500 6.500q-1 .500-2.300-.200L60.500 74V16z" fill="#2090ef"/></svg><i></i></div>
    <div><svg viewBox="0 0 90 90"><defs><linearGradient id="sw" x2="0" y2="1"><stop stop-color="#fff"/><stop offset="1" stop-color="#d5d5d5"/></linearGradient><linearGradient id="sf" x2="0" y2="1"><stop stop-color="#2198f3"/><stop offset="1" stop-color="#1e6df0"/></linearGradient></defs><rect width="90" height="90" rx="20" fill="url(#sw)"/><circle cx="45" cy="45" r="38.500" fill="url(#sf)"/><circle cx="45" cy="45" r="34" fill="none" stroke="#d5e8fc" stroke-width="5" stroke-dasharray=".9 2.070"/><path d="M72 22L50.500 50 42 42z" fill="#ee3a35"/><path d="M20 68.500L42 42l8.500 8z" fill="#f3f3f3"/><path d="M20 68.500L46.200 46l4.300 4z" fill="#c4c6c9"/></svg><i></i></div>
    <span class="mt-[-3px] ml-[11px] h-[106px] w-[2px] shrink-0 bg-[#7f8182]"></span>
    <div class="-mt-[9px] ml-[45px] !mr-0 !w-[82px]"><svg class="!h-[104px] !w-[82px]" viewBox="0 0 82 104"><defs><linearGradient id="tr"><stop stop-color="#85898c"/><stop offset=".3" stop-color="#6b7073"/><stop offset=".6" stop-color="#7d8184"/><stop offset="1" stop-color="#5d6265"/></linearGradient></defs><path d="M1 14q40-12 80 0L72 93q-2 7-12 9-19 3-38 0-10-2-12-9z" fill="url(#tr)" fill-opacity=".9"/><ellipse cx="41" cy="14" rx="39.500" ry="10.500" fill="#4a4e51" stroke="#8f9396" stroke-width="1.500"/><path d="M6 12l4-9 9 3 7-7 8 9 7-2 7-7 9 7 8-2 8 6 2 8-4 5-12-1-8 3-10-3-12 2-9-4-12 0z" fill="#dededc"/><path d="M28 12l7-3 6 5-5 6-8-2z" fill="#3fae4f"/><path d="M31 11l7-1-3 5z" fill="#2a9be0"/><path d="M46 10l11 2-2 8-8-1z" fill="#6a4b3d"/><path d="M50 12l5 7 3-6z" fill="#345a9e"/><path d="M13 6l8 11M60 6l5 13M44 3l-3 15M24 4l-3 12M49 5l9 6M8 14l8 3M70 9l-3 11" stroke="#707274" stroke-width="1.800"/><path d="M18 97q23 6 46 0" stroke="#979b9e" stroke-width="1.500" fill="none"/><path d="M14 35q10 25 8 55M64 34q-8 25-5 55" stroke="#8f9497" stroke-opacity=".45" stroke-width="6" fill="none"/></svg></div>
  </nav>

  <!-- dock tooltip -->
  <div class="absolute top-[1921px] left-[1554px] flex h-[54px] w-[200px] items-center justify-center rounded-[9px] border-2 border-[#6b6c6d] bg-[#39393b] text-[27px] text-white shadow-[0_0_0_2px_#000]">
    Screenshot
    <svg class="absolute top-[50px] left-[80px] h-[20px] w-[38px]" viewBox="0 0 38 20"><path d="M2 0q5 1 8 6l6 10q3 3 6 0l6-10q3-5 8-6z" fill="#39393b"/><path d="M0 3q6 0 9 5l6 9q4 3 8 0l6-9q3-5 9-5" fill="none" stroke="#111" stroke-width="1.500"/></svg>
  </div>
</div>
</body>
</html>
